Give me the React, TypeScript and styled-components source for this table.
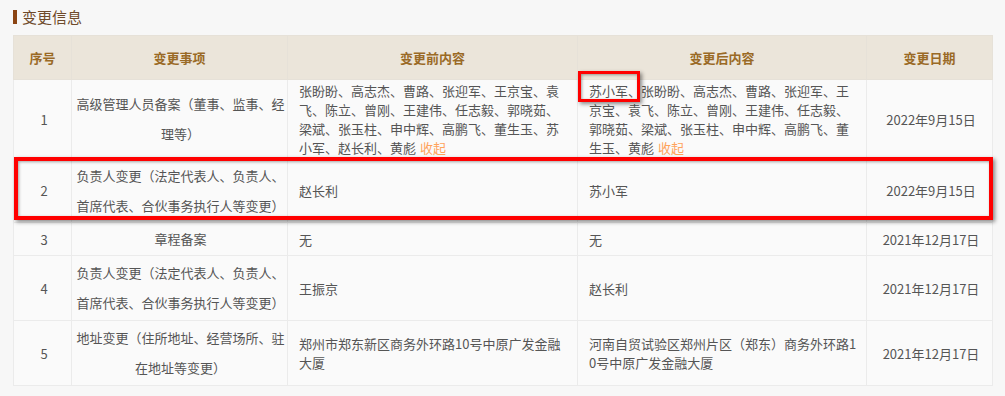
import React from "react";
import styled, { createGlobalStyle } from "styled-components";

const GlobalStyle = createGlobalStyle`
  html, body {
    margin: 0;
    padding: 0;
    background: #f7f7f7;
  }
  body {
    font-family: "Noto Sans CJK SC", "Microsoft YaHei", sans-serif;
  }
`;

const Page = styled.div`
  width: 1005px;
  height: 396px;
  padding: 8px 13px 0 13px;
  box-sizing: border-box;
  background: #f7f7f7;
`;

const Title = styled.div`
  display: flex;
  align-items: center;
  gap: 5px;
  height: 17px;
  font-size: 15px;
  color: #6e4a2a;
  margin-bottom: 10px;
`;

const TitleBar = styled.span`
  width: 4px;
  height: 14px;
  background: #8b4513;
`;

const TableWrap = styled.div`
  position: relative;
  width: 979px;
`;

const Table = styled.table`
  width: 979px;
  table-layout: fixed;
  border-collapse: collapse;
  font-size: 13px;
  color: #555;
`;

const HeadCell = styled.th`
  height: 43px;
  padding: 0;
  background: #ebe5da;
  color: #9a6a26;
  font-weight: bold;
  text-align: center;
  border: 1px solid #e6e1d8;
`;

const Cell = styled.td<{ $align?: "left" | "center"; $tall?: boolean }>`
  padding: ${(p) => (p.$tall ? "0 0 0 2px" : "0 8px 0 11px")};
  background: #fafafa;
  border: 1px solid #ebebeb;
  text-align: ${(p) => p.$align ?? "left"};
  line-height: ${(p) => (p.$tall ? "30px" : "19px")};
  vertical-align: middle;
  word-break: break-all;
`;

const Fold = styled.span`
  color: #ffa35c;
  margin-left: 4px;
  cursor: pointer;
`;

const Mark = styled.div<{ $w: number }>`
  position: absolute;
  border: ${(p) => p.$w}px solid #ff0000;
  box-shadow: 2px 2px 4px rgba(0, 0, 0, 0.45), inset 1px 1px 3px rgba(0, 0, 0, 0.35);
  pointer-events: none;
`;

type Row = {
  no: number;
  item: string;
  before: string;
  after: string;
  date: string;
  fold?: boolean;
  height: number;
};

const rows: Row[] = [
  {
    no: 1,
    item: "高级管理人员备案（董事、监事、经理等）",
    before:
      "张盼盼、高志杰、曹路、张迎军、王京宝、袁飞、陈立、曾刚、王建伟、任志毅、郭晓茹、梁斌、张玉柱、申中辉、高鹏飞、董生玉、苏小军、赵长利、黄彪",
    after:
      "苏小军、张盼盼、高志杰、曹路、张迎军、王京宝、袁飞、陈立、曾刚、王建伟、任志毅、郭晓茹、梁斌、张玉柱、申中辉、高鹏飞、董生玉、黄彪",
    date: "2022年9月15日",
    fold: true,
    height: 79,
  },
  {
    no: 2,
    item: "负责人变更（法定代表人、负责人、首席代表、合伙事务执行人等变更）",
    before: "赵长利",
    after: "苏小军",
    date: "2022年9月15日",
    height: 64,
  },
  { no: 3, item: "章程备案", before: "无", after: "无", date: "2021年12月17日", height: 33 },
  {
    no: 4,
    item: "负责人变更（法定代表人、负责人、首席代表、合伙事务执行人等变更）",
    before: "王振京",
    after: "赵长利",
    date: "2021年12月17日",
    height: 65,
  },
  {
    no: 5,
    item: "地址变更（住所地址、经营场所、驻在地址等变更）",
    before: "郑州市郑东新区商务外环路10号中原广发金融大厦",
    after: "河南自贸试验区郑州片区（郑东）商务外环路10号中原广发金融大厦",
    date: "2021年12月17日",
    height: 65,
  },
];

export default function App() {
  return (
    <Page>
      <GlobalStyle />
      <Title>
        <TitleBar />
        变更信息
      </Title>
      <TableWrap>
        <Table>
          <colgroup>
            <col style={{ width: 58 }} />
            <col style={{ width: 216 }} />
            <col style={{ width: 290 }} />
            <col style={{ width: 289 }} />
            <col style={{ width: 126 }} />
          </colgroup>
          <thead>
            <tr>
              <HeadCell>序号</HeadCell>
              <HeadCell>变更事项</HeadCell>
              <HeadCell>变更前内容</HeadCell>
              <HeadCell>变更后内容</HeadCell>
              <HeadCell>变更日期</HeadCell>
            </tr>
          </thead>
          <tbody>
            {rows.map((r) => (
              <tr key={r.no} style={{ height: r.height }}>
                <Cell $align="center">{r.no}</Cell>
                <Cell $align="center" $tall>
                  {r.item}
                </Cell>
                <Cell>
                  {r.before}
                  {r.fold && <Fold>收起</Fold>}
                </Cell>
                <Cell>
                  {r.after}
                  {r.fold && <Fold>收起</Fold>}
                </Cell>
                <Cell $align="center">{r.date}</Cell>
              </tr>
            ))}
          </tbody>
        </Table>
        <Mark $w={3} style={{ left: 565, top: 36, width: 56, height: 25 }} />
        <Mark $w={4} style={{ left: 1, top: 122, width: 971, height: 55 }} />
      </TableWrap>
    </Page>
  );
}
